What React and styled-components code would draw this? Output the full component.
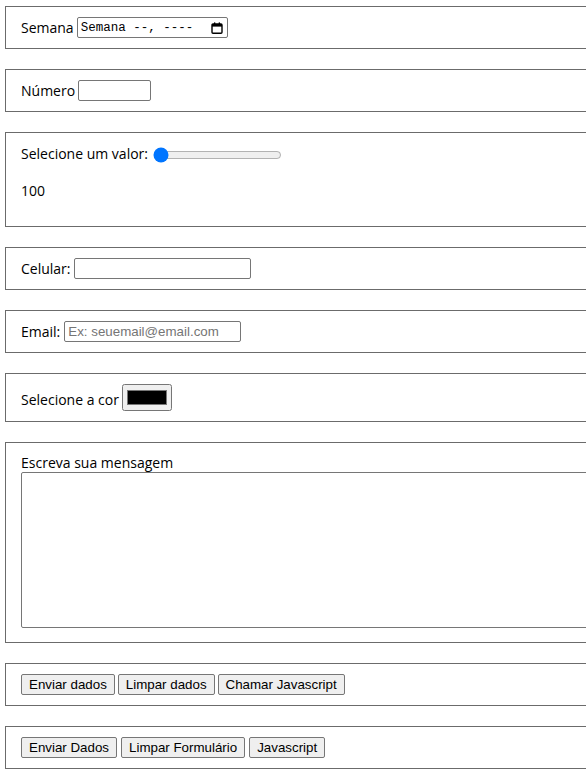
import React from "react"
import styled, { createGlobalStyle } from "styled-components"

const Global = createGlobalStyle`
html, body {
    margin:0;
    padding:0;
    overflow:hidden;
    background:#fff;
}
body{
    font-family:"Open Sans", "Noto Sans", sans-serif;
    font-size:14px;
    color:#000;
}
`

const Page = styled.div`
display:flex;
flex-direction:column;
gap:20px;
padding:6px 0 0 5px;
width:720px;
`

const Box = styled.fieldset`
margin:0;
border:1px solid #6b6b6b;
padding:10px 15px 10px 15px;
display:flex;
flex-direction:column;
min-width:0;
`

const Row = styled.div`
display:flex;
align-items:${p => p.$align || "center"};
gap:${p => p.$gap || 4}px;
min-height:21px;
`

const Label = styled.label`
line-height:19px;
white-space:nowrap;
`

const ColorLabel = styled(Label)`
margin-bottom:2px;
`

const Field = styled.input`
box-sizing:border-box;
height:21px;
width:${p => p.$w}px;
border:1px solid #767676;
border-radius:2px;
padding:1px 3px;
font-family:"Liberation Sans", Arial, sans-serif;
font-size:13.33px;
margin:0;
&::placeholder{
    color:#757575;
}
`

const WeekBox = styled.div`
box-sizing:border-box;
height:21px;
width:151px;
border:1px solid #767676;
border-radius:2px;
padding:0 4px 0 3px;
display:flex;
align-items:center;
justify-content:space-between;
font-family:"Liberation Mono", "DejaVu Sans Mono", monospace;
font-size:12.5px;
white-space:pre;
`

const Range = styled.input`
width:129px;
margin:2px 2px 0 2px;
accent-color:#0075ff;
`

const Value = styled.p`
margin:16px 0 15px 0;
line-height:21px;
`

const ColorPick = styled.input`
width:50px;
height:27px;
margin:0;
padding:1px 2px;
`

const Area = styled.textarea`
box-sizing:border-box;
width:680px;
height:156px;
margin:0 0 4px 0;
border:1px solid #767676;
border-radius:2px;
resize:none;
`

const Buttons = styled.div`
display:flex;
gap:${p => p.$gap}px;
`

const Btn = styled.button`
box-sizing:border-box;
height:21px;
margin:0;
padding:1px 7px;
font-family:"Liberation Sans", Arial, sans-serif;
font-size:13.33px;
color:#000;
background:#efefef;
border:1px solid #767676;
border-radius:2px;
`

function CalendarIcon(){
    return(
        <svg width="12" height="12" viewBox="0 0 12 12">
            <rect x="1" y="2" width="10" height="9.2" rx="1" fill="none" stroke="#000" strokeWidth="1.4"/>
            <rect x="1" y="2" width="10" height="2.6" fill="#000"/>
            <rect x="3" y="0.4" width="1.3" height="2" fill="#000"/>
            <rect x="7.7" y="0.4" width="1.3" height="2" fill="#000"/>
        </svg>
    )
}

export default function App(){
    return(
        <>
        <Global/>
        <Page>
            <Box>
                <Row $gap={3}>
                    <Label>Semana</Label>
                    <WeekBox>
                        <span>Semana --, ----</span>
                        <CalendarIcon/>
                    </WeekBox>
                </Row>
            </Box>
            <Box>
                <Row $gap={3}>
                    <Label>Número</Label>
                    <Field type="number" $w={73}/>
                </Row>
            </Box>
            <Box>
                <Row $gap={3}>
                    <Label>Selecione um valor:</Label>
                    <Range type="range" min="0" max="1000" defaultValue="0"/>
                </Row>
                <Value>100</Value>
            </Box>
            <Box>
                <Row $gap={3}>
                    <Label>Celular:</Label>
                    <Field type="tel" $w={177}/>
                </Row>
            </Box>
            <Box>
                <Row $gap={4}>
                    <Label>Email:</Label>
                    <Field type="email" $w={177} placeholder="Ex: seuemail@email.com"/>
                </Row>
            </Box>
            <Box>
                <Row $gap={3} $align="flex-end">
                    <ColorLabel>Selecione a cor</ColorLabel>
                    <ColorPick type="color" defaultValue="#000000"/>
                </Row>
            </Box>
            <Box>
                <Label>Escreva sua mensagem</Label>
                <Area/>
            </Box>
            <Box>
                <Buttons $gap={3}>
                    <Btn>Enviar dados</Btn>
                    <Btn>Limpar dados</Btn>
                    <Btn>Chamar Javascript</Btn>
                </Buttons>
            </Box>
            <Box>
                <Buttons $gap={4}>
                    <Btn>Enviar Dados</Btn>
                    <Btn>Limpar Formulário</Btn>
                    <Btn>Javascript</Btn>
                </Buttons>
            </Box>
        </Page>
        </>
    )
}
